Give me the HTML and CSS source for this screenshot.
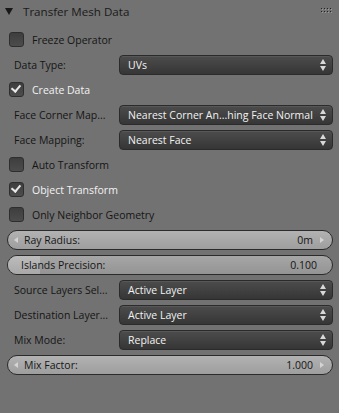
FILE: index.html
```html
<!DOCTYPE html>
<html lang="en">
<head>
    <meta charset="UTF-8">
    <title>Transfer Mesh Data</title>
    <link rel="stylesheet" href="styles.css">
</head>
<body>
    <div class="panel">
        <div class="panel-header">
            <span class="collapse"></span>
            <span class="title">Transfer Mesh Data</span>
            <span class="grip"><i></i><i></i><i></i><i></i><i></i><i></i><i></i><i></i></span>
        </div>

        <div class="rows">
            <div class="row check-row">
                <span class="checkbox"></span>
                <span class="check-label">Freeze Operator</span>
            </div>
            <div class="row">
                <span class="label">Data Type:</span>
                <div class="dropdown">UVs<span class="updown"></span></div>
            </div>
            <div class="row check-row">
                <span class="checkbox checked"></span>
                <span class="check-label on">Create Data</span>
            </div>
            <div class="row">
                <span class="label">Face Corner Map...</span>
                <div class="dropdown">Nearest Corner An...hing Face Normal<span class="updown"></span></div>
            </div>
            <div class="row">
                <span class="label">Face Mapping:</span>
                <div class="dropdown">Nearest Face<span class="updown"></span></div>
            </div>
            <div class="row check-row">
                <span class="checkbox"></span>
                <span class="check-label">Auto Transform</span>
            </div>
            <div class="row check-row">
                <span class="checkbox checked"></span>
                <span class="check-label on">Object Transform</span>
            </div>
            <div class="row check-row">
                <span class="checkbox"></span>
                <span class="check-label">Only Neighbor Geometry</span>
            </div>
            <div class="row">
                <div class="number arrows">
                    <span class="arrow-left"></span>
                    <span class="num-label">Ray Radius:</span>
                    <span class="num-value">0m</span>
                    <span class="arrow-right"></span>
                </div>
            </div>
            <div class="row">
                <div class="number slider">
                    <span class="fill" style="width: 10%;"></span>
                    <span class="num-label">Islands Precision:</span>
                    <span class="num-value">0.100</span>
                </div>
            </div>
            <div class="row">
                <span class="label">Source Layers Sel...</span>
                <div class="dropdown">Active Layer<span class="updown"></span></div>
            </div>
            <div class="row">
                <span class="label">Destination Layer...</span>
                <div class="dropdown">Active Layer<span class="updown"></span></div>
            </div>
            <div class="row">
                <span class="label">Mix Mode:</span>
                <div class="dropdown">Replace<span class="updown"></span></div>
            </div>
            <div class="row">
                <div class="number arrows">
                    <span class="arrow-left"></span>
                    <span class="num-label">Mix Factor:</span>
                    <span class="num-value">1.000</span>
                    <span class="arrow-right"></span>
                </div>
            </div>
        </div>
    </div>
</body>
</html>
```

FILE: styles.css
```css
:root {
    --bg: #727272;
    --text: #151515;
    --text-light: #f2f2f2;
    --menu-top: #4c4c4c;
    --menu-bottom: #363636;
    --num-top: #b2b2b2;
    --num-bottom: #9e9e9e;
    --outline: #2b2b2b;
}

body {
    margin: 0;
    background: var(--bg);
    font-family: 'Open Sans', 'Noto Sans', sans-serif;
    font-size: 10.5px;
    color: var(--text);
}

.panel {
    width: 339px;
    height: 413px;
    padding: 0 6px 0 7px;
    box-sizing: border-box;
}

.panel-header {
    height: 22px;
    display: flex;
    align-items: center;
}

/* disclosure triangle */
.collapse {
    width: 0;
    height: 0;
    margin-left: -2px;
    margin-right: 10px;
    margin-top: 1px;
    border-left: 4px solid transparent;
    border-right: 4px solid transparent;
    border-top: 7px solid #181818;
}

.title {
    font-size: 11.6px;
    color: #1a1a1a;
}

.grip {
    margin-left: auto;
    margin-right: 2px;
    display: grid;
    grid-template-columns: repeat(4, 1px);
    gap: 2px 2px;
    margin-top: -2px;
}

.grip i {
    width: 1px;
    height: 1px;
    background: #222;
    box-shadow: 1px 1px 0 #9a9a9a;
}

.rows {
    padding-top: 5px;
}

.row {
    height: 25px;
    display: flex;
    align-items: center;
}

.check-row {
    padding-left: 2px;
}

.checkbox {
    width: 13px;
    height: 13px;
    border: 1px solid #2e2e2e;
    border-radius: 3px;
    background: linear-gradient(#3e3e3e, #4c4c4c);
    position: relative;
    flex-shrink: 0;
}

.checkbox.checked::after {
    content: '';
    position: absolute;
    left: 3px;
    top: 0px;
    width: 4px;
    height: 7px;
    border-right: 2px solid #e8e8e8;
    border-bottom: 2px solid #e8e8e8;
    transform: rotate(40deg);
}

.check-label {
    margin-left: 8px;
}

.check-label.on {
    color: var(--text-light);
}

.label {
    width: 113px;
    padding-left: 7px;
    box-sizing: border-box;
    white-space: nowrap;
    flex-shrink: 0;
}

.dropdown {
    flex: 1;
    min-width: 0;
    height: 18px;
    margin-left: -1px;
    border: 1px solid var(--outline);
    border-radius: 4px;
    background: linear-gradient(var(--menu-top), var(--menu-bottom));
    box-shadow: inset 0 1px 0 #575757;
    color: var(--text-light);
    display: flex;
    align-items: center;
    padding-left: 8px;
    white-space: nowrap;
    overflow: hidden;
    position: relative;
}

.updown {
    position: absolute;
    right: 6px;
    top: 3px;
    width: 6px;
    height: 12px;
}

.updown::before,
.updown::after {
    content: '';
    position: absolute;
    left: 0;
    border-left: 3px solid transparent;
    border-right: 3px solid transparent;
}

.updown::before {
    top: 0;
    border-bottom: 5px solid #d8d8d8;
}

.updown::after {
    bottom: 0;
    border-top: 5px solid #d8d8d8;
}

.number {
    flex: 1;
    height: 18px;
    border: 1px solid var(--outline);
    border-radius: 10px;
    background: linear-gradient(var(--num-top), var(--num-bottom));
    display: flex;
    align-items: center;
    position: relative;
    overflow: hidden;
}

.number .num-label {
    position: relative;
}

.number .num-value {
    margin-left: auto;
    position: relative;
}

.arrows .num-label {
    margin-left: 6px;
}

.arrows .num-value {
    margin-right: 7px;
}

.slider {
    background: linear-gradient(#a6a6a6, #949494);
}

.slider .num-label {
    margin-left: 13px;
}

.slider .num-value {
    margin-right: 15px;
}

.fill {
    position: absolute;
    left: 0;
    top: 0;
    bottom: 0;
    background: linear-gradient(#bcbcbc, #a8a8a8);
}

.arrow-left,
.arrow-right {
    width: 0;
    height: 0;
    border-top: 3px solid transparent;
    border-bottom: 3px solid transparent;
}

.arrow-left {
    margin-left: 6px;
    border-right: 4px solid #d4d4d4;
}

.arrow-right {
    margin-right: 8px;
    border-left: 4px solid #d4d4d4;
}
```
